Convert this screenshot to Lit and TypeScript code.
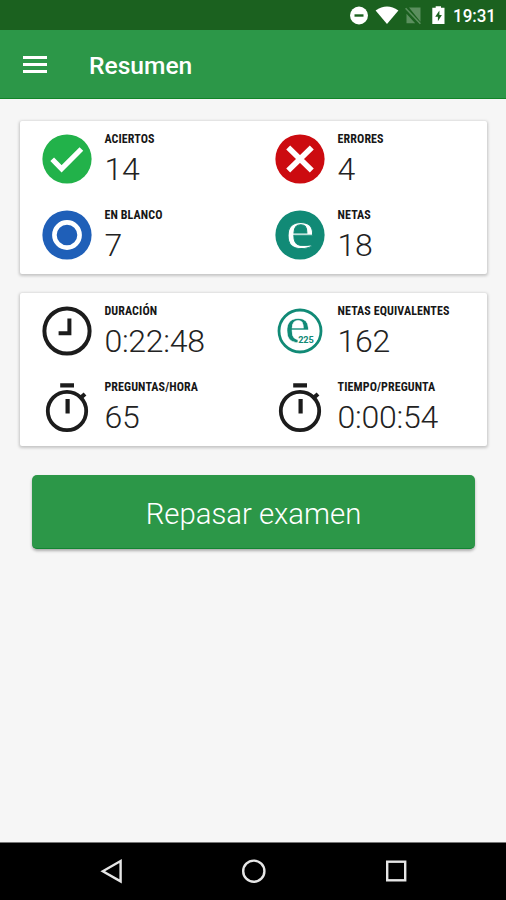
import { LitElement, html, svg, css } from "lit";
import { customElement, property } from "lit/decorators.js";

const icons: Record<string, unknown> = {
  check: svg`<circle cx="25" cy="25" r="24.6" fill="#22b24a"/><path d="M10.2 25.2 19.6 34.8 39.4 15" fill="none" stroke="#fff" stroke-width="5.2"/>`,
  cross: svg`<circle cx="25" cy="25" r="24.6" fill="#cc0b10"/><path d="M13.2 13.4 36.8 36.6M36.8 13.4 13.2 36.6" fill="none" stroke="#fff" stroke-width="5.6"/>`,
  blank: svg`<circle cx="25" cy="25" r="24.6" fill="#1f5fb8"/><circle cx="25" cy="25" r="12.6" fill="none" stroke="#fff" stroke-width="4.6"/>`,
  net: svg`<circle cx="25" cy="25" r="24.6" fill="#118a76"/><text class="serif" transform="translate(25.2 37.8) scale(1.2 1)" font-size="55" text-anchor="middle" fill="#fff" stroke="#118a76" stroke-width="0.8">e</text>`,
  clock: svg`<circle cx="25" cy="25" r="22.6" fill="none" stroke="#1c1c1c" stroke-width="4"/><path d="M27.4 12.6V27.2H16.6" fill="none" stroke="#1c1c1c" stroke-width="4"/>`,
  equiv: svg`<circle cx="25" cy="25" r="21" fill="none" stroke="#118a76" stroke-width="2.8"/><text class="serif" transform="translate(22.6 36.2) scale(1.15 1)" font-size="50" text-anchor="middle" fill="#118a76" stroke="#fff" stroke-width="0.4">e</text><path d="M22.6 29.4H40V38H22.6Z" fill="#fff"/><text class="sans" x="31" y="36.6" font-size="9.2" font-weight="700" text-anchor="middle" textLength="15.6" fill="#118a76">225</text>`,
  stopwatch: svg`<circle cx="25" cy="29" r="19.2" fill="none" stroke="#1c1c1c" stroke-width="3.8"/><path d="M18.2 3.4H32M25.6 17V31.6" fill="none" stroke="#1c1c1c" stroke-width="4.2"/><path d="M37.4 16.8 43 12" stroke="#1c1c1c" stroke-width="4.2"/>`,
};

@customElement("stat-item")
class StatItem extends LitElement {
  @property() icon = "";
  @property() label = "";
  @property() value = "";

  static styles = css`
    :host { display: flex; height: 76px; }
    svg { width: 50px; height: 50px; flex: none; margin: 13px 12.4px 0 0; overflow: visible; }
    .serif { font-family: "Liberation Serif", serif; }
    .sans { font-family: Roboto, sans-serif; }
    .text { display: flex; flex-direction: column; white-space: nowrap; }
    .label {
      font: 700 12px/14px "Roboto Condensed", Roboto, sans-serif;
      font-stretch: 75%;
      letter-spacing: 0.1px;
      color: #171717; margin-top: 11px;
    }
    .value { font: 300 32px/38px Roboto, sans-serif; color: #222; margin-top: 4px; letter-spacing: -0.25px; }
  `;

  render() {
    return html`<svg viewBox="0 0 50 50">${icons[this.icon]}</svg>
      <div class="text"><span class="label">${this.label}</span><span class="value">${this.value}</span></div>`;
  }
}

@customElement("app-root")
class AppRoot extends LitElement {
  static styles = css`
    :host { display: flex; flex-direction: column; height: 900px; background: #f6f6f6; font-family: Roboto, sans-serif; }
    .status { height: 30px; background: #1b611f; flex: none; }
    .status svg { display: block; width: 506px; height: 30px; }
    .status text { font: 500 18px Roboto, sans-serif; }
    .bar { height: 69px; flex: none; background: #2c9748; display: flex; align-items: center; border-bottom: 1px solid #118427; box-sizing: border-box; }
    .bar svg { width: 24px; height: 18px; margin: 1px 0 0 23px; }
    .title { font: 500 24.6px/30px Roboto, sans-serif; color: #fff; margin: 4px 0 0 42px; }
    main { flex: 1; display: flex; flex-direction: column; padding: 22px 19px 0 20px; }
    .card {
      box-sizing: border-box; height: 153px; background: #fff; border-radius: 2px;
      box-shadow: 0 1px 3px 1px rgba(0,0,0,.2);
      display: grid; grid-template-columns: 233.2px 1fr; align-content: start; padding-left: 22px;
    }
    .card + .card { margin-top: 19px; }
    button {
      height: 74px; margin: 29px 12px 0 12px; border: 0; border-bottom: 1px solid #128532; border-radius: 5px; background: #2c9748;
      color: #fff; font: 300 29.3px/36px Roboto, sans-serif; padding: 5px 0 0; box-shadow: 0 2px 3px rgba(0,0,0,.3);
    }
    nav { height: 58px; flex: none; background: #000; border-top: 1px solid #777; box-sizing: border-box; }
    nav svg { display: block; width: 506px; height: 57px; }
  `;

  render() {
    return html`
      <div class="status">
        <svg viewBox="0 0 506 30">
          <circle cx="359" cy="15.5" r="9" fill="#fff"/><path d="M354.5 15.5h9" stroke="#1b611f" stroke-width="2.4"/>
          <path d="M375.6 10.4Q387 2.8 398.4 10.4L387 24Z" fill="#fff"/>
          <path d="M409 7.5H420.5V21.8ZM406.5 13.8 415.2 23.3H406.5Z" fill="#5b8f5e"/><path d="M405.6 8.2 420.4 23.8" stroke="#5b8f5e" stroke-width="1.6"/>
          <path d="M435.7 7.8V6.2H441V7.8H444.5V24H432.3V7.8Z" fill="#fff"/><path d="M439.4 10.5 435.2 16.7H437.9V21.3L441.9 15.1H439.4Z" fill="#1b611f"/>
          <text x="453" y="22" fill="#fff" textLength="43" lengthAdjust="spacingAndGlyphs">19:31</text>
        </svg>
      </div>
      <header class="bar">
        <svg viewBox="0 0 24 18"><path d="M0 1.5H24M0 8.5H24M0 15.5H24" stroke="#fff" stroke-width="2.8"/></svg>
        <span class="title">Resumen</span>
      </header>
      <main>
        <section class="card">
          <stat-item icon="check" label="ACIERTOS" value="14"></stat-item>
          <stat-item icon="cross" label="ERRORES" value="4"></stat-item>
          <stat-item icon="blank" label="EN BLANCO" value="7"></stat-item>
          <stat-item icon="net" label="NETAS" value="18"></stat-item>
        </section>
        <section class="card">
          <stat-item icon="clock" label="DURACIÓN" value="0:22:48"></stat-item>
          <stat-item icon="equiv" label="NETAS EQUIVALENTES" value="162"></stat-item>
          <stat-item icon="stopwatch" label="PREGUNTAS/HORA" value="65"></stat-item>
          <stat-item icon="stopwatch" label="TIEMPO/PREGUNTA" value="0:00:54"></stat-item>
        </section>
        <button>Repasar examen</button>
      </main>
      <nav>
        <svg viewBox="0 0 506 57" fill="none" stroke="#e6e6e6" stroke-width="2.4">
          <path d="M102.8 28.2 120.6 18V38.4Z"/><circle cx="253.8" cy="28.2" r="10.6"/><rect x="387.2" y="18.7" width="18" height="18.6"/>
        </svg>
      </nav>`;
  }
}
